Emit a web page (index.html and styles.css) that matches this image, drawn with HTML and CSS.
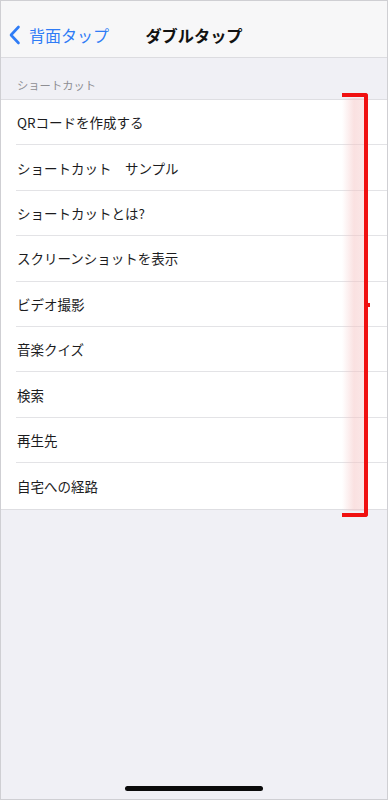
FILE: index.html
```html
<!DOCTYPE html>
<html lang="ja">
<head>
<meta charset="utf-8">
<link rel="stylesheet" href="styles.css">
</head>
<body>
<div class="screen">
  <header class="nav">
    <div class="nav-left">
      <svg class="chev" width="14" height="20" viewBox="0 0 14 20"><path d="M10.5 2 L3 10 L10.5 18" fill="none" stroke="#2f7cf6" stroke-width="2.6" stroke-linecap="round" stroke-linejoin="round"/></svg>
      <span class="back">背面タップ</span>
    </div>
    <div class="title">ダブルタップ</div>
    <div class="nav-right"></div>
  </header>
  <div class="section-head">ショートカット</div>
  <ul class="list">
    <li class="row">QRコードを作成する</li>
    <li class="row">ショートカット　サンプル</li>
    <li class="row">ショートカットとは?</li>
    <li class="row">スクリーンショットを表示</li>
    <li class="row">ビデオ撮影</li>
    <li class="row">音楽クイズ</li>
    <li class="row">検索</li>
    <li class="row">再生先</li>
    <li class="row">自宅への経路</li>
  </ul>
  <div class="home-bar"></div>
  <div class="glow"></div>
  <div class="bracket"></div>
  <div class="nub"></div>
</div>
</body>
</html>
```
FILE: styles.css
```css
* { box-sizing: border-box; }
html, body { margin: 0; padding: 0; }
body {
  font-family: "Noto Sans CJK JP", "Noto Sans", sans-serif;
  background: #fff;
}
.screen {
  position: relative;
  width: 388px;
  height: 800px;
  border: 1px solid #cfcfd3;
  background: #f0f0f5;
  display: flex;
  flex-direction: column;
  overflow: hidden;
}
.nav {
  height: 57px;
  flex: none;
  background: #f7f7f8;
  border-bottom: 1px solid #dcdce0;
  display: grid;
  grid-template-columns: 1fr auto 1fr;
  align-items: center;
  padding-top: 11px;
}
.nav-left {
  display: flex;
  align-items: center;
  gap: 7px;
  padding-left: 7px;
}
.chev { display: block; }
.back {
  color: #2f7cf6;
  font-size: 16px;
}
.title {
  font-size: 16.2px;
  font-weight: 700;
  color: #111;
}
.section-head {
  height: 41px;
  flex: none;
  padding: 19px 0 0 16px;
  font-size: 11.3px;
  color: #8e8e93;
  line-height: 16px;
}
.list {
  list-style: none;
  margin: 0;
  padding: 0 0 0 15px;
  background: #fff;
  border-top: 1px solid #dedee2;
  border-bottom: 1px solid #dedee2;
  flex: none;
}
.row {
  height: 45.4px;
  display: flex;
  align-items: center;
  padding-left: 1px;
  font-size: 13.5px;
  color: #1c1c1e;
  border-bottom: 1px solid #e3e3e6;
}
.row:last-child { border-bottom: none; }
.home-bar {
  margin: auto auto 8px;
  width: 138px;
  height: 5px;
  border-radius: 3px;
  background: #0a0a0a;
}
.glow {
  position: absolute;
  left: 341px;
  top: 97px;
  width: 22px;
  height: 413px;
  background: linear-gradient(to right, rgba(245,195,195,0), rgba(245,195,195,0.5) 55%, rgba(245,195,195,0.4));
}
.bracket {
  position: absolute;
  left: 341px;
  top: 92px;
  width: 26px;
  height: 424px;
  border: 4px solid #f01010;
  border-left: none;
  border-radius: 0 3px 3px 0;
}
.nub {
  position: absolute;
  left: 366px;
  top: 302px;
  width: 3px;
  height: 4px;
  background: #f01010;
}
```
